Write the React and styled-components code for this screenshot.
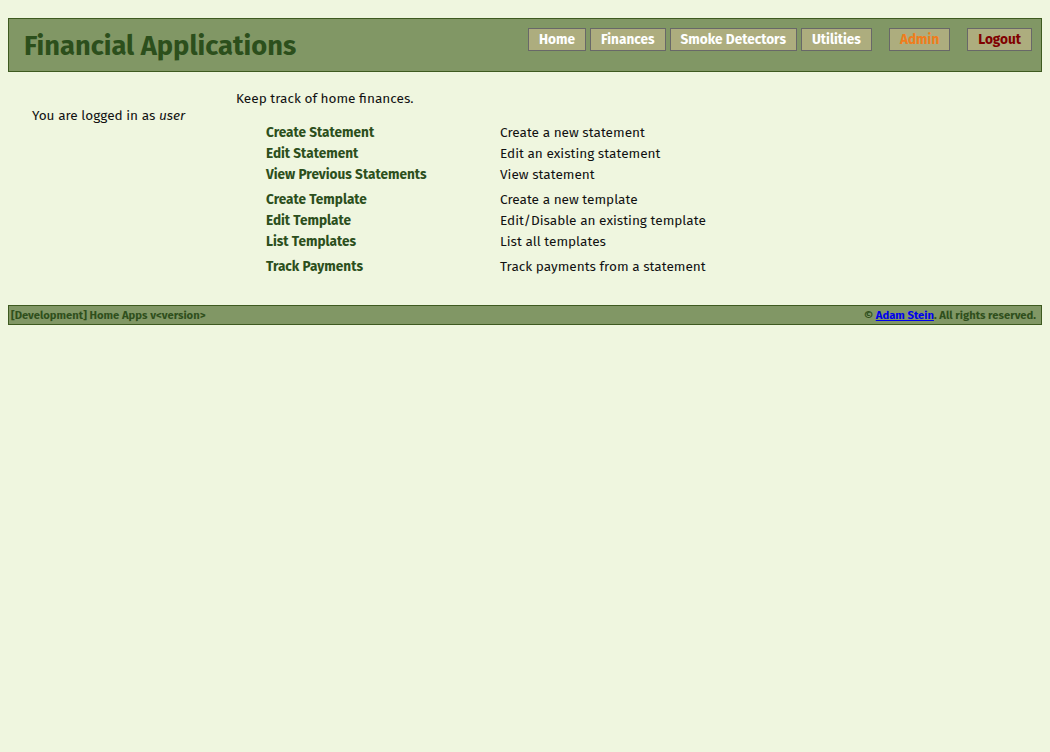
import React from "react";
import styled, { createGlobalStyle } from "styled-components";

const Global = createGlobalStyle`
  html, body { margin: 0; padding: 0; }
  body {
    background: #eff6df;
    font-family: "Fira Sans", "Open Sans", sans-serif;
    color: #111;
    padding: 8px;
    min-height: 752px;
    box-sizing: border-box;
  }
`;

const Header = styled.header`
  margin-top: 10px;
  height: 52px;
  background: #819765;
  border: 1px solid #3e5a20;
  display: flex;
  align-items: flex-start;
  justify-content: space-between;
  padding: 0 9px 0 15px;
`;

const Title = styled.h1`
  margin: 0;
  padding-top: 10px;
  font-size: 27.3px;
  font-weight: 700;
  color: #2c4f1c;
`;

const Nav = styled.nav`
  display: flex;
  align-items: center;
  padding-top: 9px;
`;

const NavGroup = styled.div`
  display: flex;
  gap: 4px;
  margin-left: ${(p) => p.$gap || 0}px;
`;

const NavButton = styled.a`
  display: inline-flex;
  align-items: center;
  height: 21px;
  padding: 0 10px;
  background: #adad7e;
  border: 1px solid #686868;
  font-size: 13.6px;
  font-weight: 700;
  color: ${(p) => p.$color || "#ffffff"};
  text-decoration: none;
  cursor: pointer;
`;

const Main = styled.main`
  display: grid;
  grid-template-columns: 228px 1fr;
  padding-top: 18px;
  min-height: 215px;
`;

const Sidebar = styled.aside`
  padding: 17px 0 0 24px;
  font-size: 13.6px;
`;

const Content = styled.section`
  font-size: 13.6px;
`;

const Intro = styled.p`
  margin: 0 0 15px 0;
`;

const LinkTable = styled.div`
  display: flex;
  flex-direction: column;
  gap: 4px;
  padding-left: 30px;
`;

const Group = styled.div`
  display: flex;
  flex-direction: column;
`;

const Row = styled.div`
  display: grid;
  grid-template-columns: 234px 1fr;
  height: 21px;
  align-items: center;
`;

const AppLink = styled.a`
  font-weight: 700;
  color: #2c4f1c;
  text-decoration: none;
  cursor: pointer;
`;

const Footer = styled.footer`
  display: flex;
  justify-content: space-between;
  align-items: center;
  height: 18px;
  background: #819765;
  border: 1px solid #3e5a20;
  padding: 0 5px 0 2px;
  font-size: 11.25px;
  font-weight: 700;
  color: #2f4f1c;
`;

const FooterLink = styled.a`
  color: #0000ee;
  text-decoration: underline;
`;

const groups = [
  [
    ["Create Statement", "Create a new statement"],
    ["Edit Statement", "Edit an existing statement"],
    ["View Previous Statements", "View statement"],
  ],
  [
    ["Create Template", "Create a new template"],
    ["Edit Template", "Edit/Disable an existing template"],
    ["List Templates", "List all templates"],
  ],
  [["Track Payments", "Track payments from a statement"]],
];

export default function App() {
  return (
    <>
      <Global />
      <Header>
        <Title>Financial Applications</Title>
        <Nav>
          <NavGroup>
            <NavButton>Home</NavButton>
            <NavButton>Finances</NavButton>
            <NavButton>Smoke Detectors</NavButton>
            <NavButton>Utilities</NavButton>
          </NavGroup>
          <NavGroup $gap={17}>
            <NavButton $color="#f07d1c">Admin</NavButton>
          </NavGroup>
          <NavGroup $gap={17}>
            <NavButton $color="#800000">Logout</NavButton>
          </NavGroup>
        </Nav>
      </Header>
      <Main>
        <Sidebar>
          You are logged in as <em>user</em>
        </Sidebar>
        <Content>
          <Intro>Keep track of home finances.</Intro>
          <LinkTable>
            {groups.map((g, i) => (
              <Group key={i}>
                {g.map(([name, desc]) => (
                  <Row key={name}>
                    <AppLink>{name}</AppLink>
                    <span>{desc}</span>
                  </Row>
                ))}
              </Group>
            ))}
          </LinkTable>
        </Content>
      </Main>
      <Footer>
        <span>[Development] Home Apps v&lt;version&gt;</span>
        <span>
          © <FooterLink href="#">Adam Stein</FooterLink>. All rights reserved.
        </span>
      </Footer>
    </>
  );
}
